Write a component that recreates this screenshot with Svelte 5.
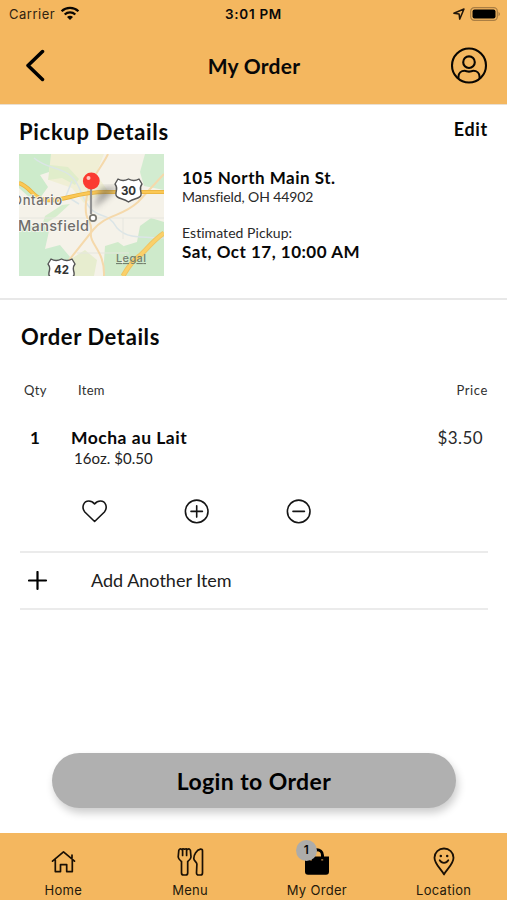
<script lang="ts">
	let quantity = 1;
	let favorite = false;
	let active = 'My Order';

	const tabs = ['Home', 'Menu', 'My Order', 'Location'];

	const add = () => {
	  quantity = quantity + 1;
	};

	const remove = () => {
	  quantity = quantity > 1 ? quantity - 1 : 1;
	};
</script>

<main>
	<header>
		<div class="status">
			<div class="carrier">
				<span>Carrier</span>
				<svg width="20" height="15" viewBox="0 0 20 15" fill="none" stroke="#090602" stroke-width="2.3">
					<path d="M1.6 5.2C6.2 .7 13.8 .7 18.4 5.2" />
					<path d="M4.7 8.5c3-2.8 7.6-2.8 10.6 0" />
					<path d="M7 11c1.7-1.6 4.3-1.6 6 0l-3 3z" fill="#090602" stroke="none" />
				</svg>
			</div>
			<span class="time">3:01 PM</span>
			<div class="power">
				<svg width="12" height="12" viewBox="0 0 12 12" fill="none" stroke="#21170b" stroke-width="1.5" stroke-linejoin="round">
					<path d="M.9 5.2 11 1 6.7 11.1 6.1 6z" />
				</svg>
				<svg width="31" height="14" viewBox="0 0 31 14">
					<rect x=".7" y=".7" width="26.6" height="12.6" rx="3.6" fill="none" stroke="#aa7e43" stroke-width="1.2" />
					<rect x="2.5" y="2.5" width="23" height="9" rx="2" />
					<path d="M28.5 4.7q3 2.3 0 4.6z" fill="#aa7e43" />
				</svg>
			</div>
		</div>
		<div class="title-bar">
			<button aria-label="Back">
				<svg width="20" height="34" viewBox="0 0 20 34" fill="none" stroke="#000" stroke-width="3.5" stroke-linecap="round" stroke-linejoin="round">
					<path d="M16.5 2.5 2 16.5l14.5 14" />
				</svg>
			</button>
			<h1>My Order</h1>
			<button aria-label="Account">
				<svg width="38" height="38" viewBox="0 0 38 38" fill="none" stroke="#090602" stroke-width="2.1">
					<circle cx="19" cy="18.5" r="17" />
					<circle cx="19" cy="15.2" r="5.8" />
					<path d="M8.4 31.5V30c0-3.8 2.8-6.2 6.3-6.2 1.5 0 2.4.8 4.3.8s2.8-.8 4.3-.8c3.5 0 6.3 2.4 6.3 6.2v1.5" />
				</svg>
			</button>
		</div>
	</header>

	<section class="pickup">
		<div class="heading">
			<h2>Pickup Details</h2>
			<button class="edit">Edit</button>
		</div>
		<div class="pickup-info">
			<svg class="map" width="145" height="122" viewBox="0 0 145 122">
				<defs>
					<filter id="soft"><feGaussianBlur stdDeviation="3" /></filter>
				</defs>
				<rect width="145" height="122" fill="#f5f2e9" />
				<path d="M30 0h55l-8 20 12 17-24 12-12-15-23-8z" fill="#f0efd5" />
				<path d="M0 0h32l-2 18-9 3 8 12-8 11-12-2-9-8z" fill="#cdebcb" />
				<path d="M31 11l18 2 11 12-4 6-13-7-14 2z" fill="#e0edca" />
				<path d="M126 0h19v36l-20-4-4-14z" fill="#d2ecd0" />
				<path d="M0 69l10 4 13-4 7 8-4 18 15-4 10 12-14 19H0z" fill="#ceebcf" />
				<path d="M26 62l17-11 8-1-13 12-15 10z" fill="#d6edcd" />
				<path d="M121 72l11-8 13 4v54h-38l-5-9 5-11-2-10 13-4z" fill="#ceeacb" />
				<path d="M86 92l13-4 11 8-8 12 6 14H84z" fill="#d1ebcb" />
				<path d="M52 105l14-9 12 10-3 16H47z" fill="#e7edcf" />
				<g fill="none" stroke="#dbe5e7" stroke-width="1.5">
					<path d="M15 4c14 12 27 8 38 19 9 8 9 22 19 32s17 3 26 19c10 11 25 9 47 10" />
					<path d="M53 27l-6 15 13 8" />
				</g>
				<g fill="none" stroke="#e6e6df">
					<path d="M0 64h145M58 99h52M104 64v21" />
				</g>
				<g fill="none" stroke="#f5d9ab" stroke-width="2">
					<path d="M89 0C82 15 69 26 67 48s7 17 5 30 14 18 13 44" />
					<path d="M145 20 119 48C103 63 87 60 74 76L47 110l-5 12" />
				</g>
				<g fill="none">
					<path d="M0 29c12 4 13 15 27 17 19 2 27-8 60-8h58" stroke="#e8b23d" stroke-width="4.2" />
					<path d="M0 29c12 4 13 15 27 17 19 2 27-8 60-8h58" stroke="#fbc855" stroke-width="2.6" />
					<path d="M145 79c-13 9-18 18-26 24-7 5-11 12-15 19" stroke="#eec361" stroke-width="5" />
					<path d="M145 79c-13 9-18 18-26 24-7 5-11 12-15 19" stroke="#fad06a" stroke-width="3.3" />
				</g>
				<path d="M74 55 82 34 99 33 89 43z" fill="#555" opacity=".5" filter="url(#soft)" />
				<g class="place">
					<text x="-7" y="51" textLength="50">Ontario</text>
					<text x="-1" y="77" font-size="14.5" textLength="71">Mansfield</text>
				</g>
				<text class="legal" x="97" y="108" textLength="30">Legal</text>
				<g fill="#fff" stroke="#555" stroke-width="1.4" stroke-linejoin="round">
					<path d="M99 25q5 3 10.5 0 5.5 3 10.5 0l3 5c-4 5 0 7-1 11-1 4-7 3-12.5 7-5.5-4-11.5-3-12.5-7-1-4 3-6-1-11z" />
					<path d="M32 105q5 3 10.5 0 5.5 3 10.5 0l3 5c-4 5 0 7-1 11-1 4-7 3-12.5 7-5.5-4-11.5-3-12.5-7-1-4 3-6-1-11z" />
				</g>
				<g class="route">
					<text x="109.5" y="41">30</text>
					<text x="42.5" y="120">42</text>
				</g>
				<path d="M72 33v27" stroke="#929292" stroke-width="2.2" />
				<circle cx="74" cy="64" r="3.2" fill="#fff" stroke="#77766f" stroke-width="1.7" />
				<circle cx="72.3" cy="27" r="8.4" fill="#fb3b30" />
				<circle cx="69.5" cy="24" r="2" fill="#ffc6bf" />
			</svg>
			<div class="address">
				<strong class="street">105 North Main St.</strong>
				<p class="city">Mansfield, OH 44902</p>
				<p class="estimate">Estimated Pickup:</p>
				<strong class="date">Sat, Oct 17, 10:00 AM</strong>
			</div>
		</div>
	</section>

	<section class="order">
		<h2>Order Details</h2>
		<div class="columns">
			<span class="qty-label">Qty</span>
			<span class="item-label">Item</span>
			<span class="price-label">Price</span>
		</div>
		<div class="item">
			<strong class="qty">{quantity}</strong>
			<div class="item-name">
				<strong>Mocha au Lait</strong>
				<p>16oz. $0.50</p>
			</div>
			<span class="price">${(quantity * 3.5).toFixed(2)}</span>
		</div>
		<div class="actions">
			<button aria-label="Favorite" on:click={() => (favorite = !favorite)}>
				<svg width="26" height="26" viewBox="0 0 26 26" fill={favorite ? '#111' : 'none'} stroke="#151515" stroke-width="1.6" stroke-linejoin="round">
					<path d="M12.6 23.5 2.8 14C-.8 9.5 1.5 3 6.8 3c2.5 0 4.2 1 5.8 3 1.6-2 3.3-3 5.8-3 5.3 0 7.6 6.5 4 11z" />
				</svg>
			</button>
			<button aria-label="Add one" on:click={add}>
				<svg width="26" height="26" viewBox="0 0 26 26" fill="none" stroke="#151515" stroke-width="1.6" stroke-linecap="round">
					<circle cx="12.7" cy="13.4" r="11.3" />
					<path d="M7 13.4h11.4M12.7 7.7v11.4" />
				</svg>
			</button>
			<button aria-label="Remove one" on:click={remove}>
				<svg width="26" height="26" viewBox="0 0 26 26" fill="none" stroke="#151515" stroke-width="1.6" stroke-linecap="round">
					<circle cx="12.7" cy="13.4" r="11.3" />
					<path d="M7 13.4h11.4" />
				</svg>
			</button>
		</div>
		<button class="another">
			<svg width="20" height="20" viewBox="0 0 20 20" stroke="#000" stroke-width="2.2" stroke-linecap="round">
				<path d="M1 9.5h17M9.5 1v17" />
			</svg>
			<span>Add Another Item</span>
		</button>
	</section>

	<button class="login"><span>Login to Order</span></button>

	<nav>
		{#each tabs as tab}
			<button class="tab" class:active={active === tab} on:click={() => (active = tab)}>
				<div class="icon">
					{#if tab === 'Home'}
						<svg width="28" height="30" viewBox="0 0 28 30" fill="none" stroke="#1a1005" stroke-width="1.7" stroke-linejoin="round" stroke-linecap="round">
							<path d="M3.5 14.2 14.5 4.8l11 9.4M6.3 13v11.6h5.2v-7h6.2v7h5.6V13M23 11.3V8" />
						</svg>
					{:else if tab === 'Menu'}
						<svg width="28" height="30" viewBox="0 0 28 30" fill="none" stroke="#1a1005" stroke-width="1.7" stroke-linejoin="round" stroke-linecap="round">
							<path d="M2.2 10 2.8 3.4Q3.8 1 5.5 2.4 6.9 1.2 8.6 2.2 10.3 1.2 11.7 2.4 13.4 1 14.4 3.4L15 10C14.8 12.5 13 13.5 11.7 14.5V26Q11.7 28 9.7 28H7.6Q5.5 28 5.5 26V14.5C4.2 13.5 2.4 12.5 2.2 10zM6.6 3.2V8.5M10.6 3.2V8.5" />
							<path d="M26.5 26V3.7Q26.5 2 24.5 2.2C20.5 3 17.8 7.5 17.8 11.5 17.8 14 20.7 14.5 20.9 17L20.5 26Q20.6 28 22.5 28H24.5Q26.5 28 26.5 26z" />
						</svg>
					{:else if tab === 'My Order'}
						<svg width="28" height="30" viewBox="0 0 28 30">
							<path d="M2 9.5h24v15.2q0 3-3 3H5q-3 0-3-3z" />
							<path d="M8 13V8.2c0-7.3 11.5-7.3 11.5 0V13" fill="none" stroke="#000" stroke-width="3" />
							<path d="M8 12.2v1.3M19.2 12.2v1.3" stroke="#b8864a" stroke-width="2" />
						</svg>
						<span class="badge">{quantity}</span>
					{:else}
						<svg width="28" height="30" viewBox="0 0 28 30" fill="none" stroke="#1a1005" stroke-width="1.8" stroke-linecap="round">
							<path d="M14 27.5C11.8 22.5 4.5 17.4 4.5 10.7a9.5 9.2 0 0 1 19 0C23.5 17.4 16.2 22.5 14 27.5z" stroke-linejoin="round" />
							<path d="M9.7 13.3c2 3.4 6.6 3.4 8.6 0" />
							<path d="M10.8 9v.1M17.2 9v.1" stroke-width="2.5" />
						</svg>
					{/if}
				</div>
				<span class="label">{tab}</span>
			</button>
		{/each}
	</nav>
</main>

<style>
	:global(body) {
		background: #fff;
	}
	main {
		display: flex;
		flex-direction: column;
		width: 507px;
		height: 900px;
		overflow: hidden;
		background: #fff;
		color: #080808;
		font-family: Lato, 'Noto Sans', sans-serif;
	}
	h1, h2, p {
		margin: 0;
	}
	button {
		padding: 0;
		border: 0;
		background: none;
		color: inherit;
		font-family: inherit;
		cursor: pointer;
	}
	svg {
		display: block;
	}
	header {
		height: 104px;
		border-bottom: 1px solid #e9dfd2;
		background: #f4b75f;
	}
	.status {
		display: grid;
		grid-template-columns: 1fr auto 1fr;
		align-items: center;
		height: 27px;
		padding: 0 6px 0 9px;
		font-family: Inter, sans-serif;
		font-size: 13px;
	}
	.carrier, .power {
		display: flex;
		align-items: center;
		gap: 5px;
	}
	.carrier {
		color: #302210;
		letter-spacing: 0.5px;
	}
	.power {
		justify-content: flex-end;
	}
	.time {
		padding-right: 3px;
		font-weight: 600;
		font-size: 13.5px;
		letter-spacing: 0.7px;
	}
	.title-bar {
		display: grid;
		grid-template-columns: 1fr auto 1fr;
		align-items: center;
		height: 77px;
		padding: 0 19px 0 26px;
	}
	.title-bar button {
		justify-self: start;
	}
	.title-bar button:last-child {
		justify-self: end;
	}
	h1 {
		padding-right: 6px;
		font-size: 21px;
		font-weight: 700;
		letter-spacing: 0.25px;
	}
	h2 {
		font-size: 22px;
		font-weight: 700;
		line-height: 28px;
		letter-spacing: 0.7px;
	}
	.pickup {
		height: 180px;
		padding: 13px 19px 0;
		border-bottom: 2px solid #e8e8e8;
	}
	.heading {
		display: flex;
		justify-content: space-between;
		height: 36px;
	}
	.edit {
		height: 22px;
		font-size: 18px;
		font-weight: 700;
		line-height: 22px;
		letter-spacing: 0.7px;
	}
	.pickup-info {
		display: flex;
		gap: 18px;
	}
	.place {
		fill: #6f6d6a;
		stroke: #faf8f2;
		stroke-width: 1.5px;
		paint-order: stroke;
		font-family: Inter, sans-serif;
		font-size: 13px;
		font-weight: 500;
	}
	.legal {
		fill: #73806e;
		font-family: Inter, sans-serif;
		font-size: 11px;
		font-weight: 500;
		text-decoration: underline;
	}
	.route {
		fill: #333;
		font-family: Inter, sans-serif;
		font-size: 11.5px;
		font-weight: 700;
		text-anchor: middle;
	}
	.address {
		display: flex;
		flex-direction: column;
		align-items: flex-start;
		padding-top: 13px;
	}
	.address strong {
		font-size: 17px;
		line-height: 22px;
		letter-spacing: 0.5px;
	}
	.address p {
		color: #292929;
		font-size: 14px;
		line-height: 17px;
	}
	.address .city {
		margin-top: -1px;
		padding-bottom: 1px;
		letter-spacing: -0.1px;
	}
	.address .estimate {
		padding: 18px 0 0;
		letter-spacing: 0.05px;
	}
	.order {
		padding: 23px 19px 0 20px;
	}
	.order h2 {
		padding-left: 1px;
		letter-spacing: 0.6px;
	}
	.columns {
		display: flex;
		padding: 30px 0 0 4px;
		color: #303030;
		font-size: 13px;
		line-height: 18px;
		letter-spacing: 0.3px;
	}
	.qty-label {
		width: 54px;
	}
	.price-label {
		margin-left: auto;
		letter-spacing: 0.6px;
	}
	.item {
		display: flex;
		padding-top: 28px;
		font-size: 17px;
		line-height: 22px;
	}
	.qty {
		width: 30px;
		text-align: center;
	}
	.item-name {
		flex: 1;
		padding-left: 21px;
	}
	.item-name strong {
		font-size: 17.5px;
		letter-spacing: 0.5px;
	}
	.item-name p {
		padding-left: 3px;
		color: #222;
		font-size: 15px;
		line-height: 18px;
		letter-spacing: 0.05px;
	}
	.price {
		padding-right: 5px;
		color: #292929;
		letter-spacing: 0.4px;
	}
	.actions {
		display: flex;
		gap: 76px;
		padding: 31px 0 27px 62px;
	}
	.another {
		display: flex;
		align-items: center;
		width: 100%;
		height: 59px;
		padding-left: 8px;
		border: solid #ebebeb;
		border-width: 2px 0;
		font-size: 18px;
		color: #202020;
	}
	.another span {
		padding: 0 0 1px 43px;
	}
	.login {
		width: 404px;
		height: 55px;
		margin: auto 0 25px 52px;
		border-radius: 28px;
		background: #b0b0b0;
		box-shadow: 2px 5px 9px #0003;
		font-size: 23px;
		font-weight: 700;
		letter-spacing: 0.4px;
		color: #000;
	}
	nav {
		display: flex;
		flex: none;
		height: 67px;
		background: #f4b75f;
	}
	.tab {
		display: flex;
		flex: 1;
		flex-direction: column;
		align-items: center;
		padding-top: 14px;
	}
	.icon {
		position: relative;
	}
	.badge {
		position: absolute;
		top: -7px;
		left: -7px;
		width: 21px;
		height: 21px;
		border-radius: 50%;
		background: #adacaa;
		font-family: Inter, sans-serif;
		font-size: 12px;
		font-weight: 600;
		line-height: 20px;
	}
	.label {
		padding-top: 5px;
		color: #24190b;
		font-family: Inter, sans-serif;
		font-size: 13px;
		line-height: 16px;
		letter-spacing: 0.3px;
	}
</style>
